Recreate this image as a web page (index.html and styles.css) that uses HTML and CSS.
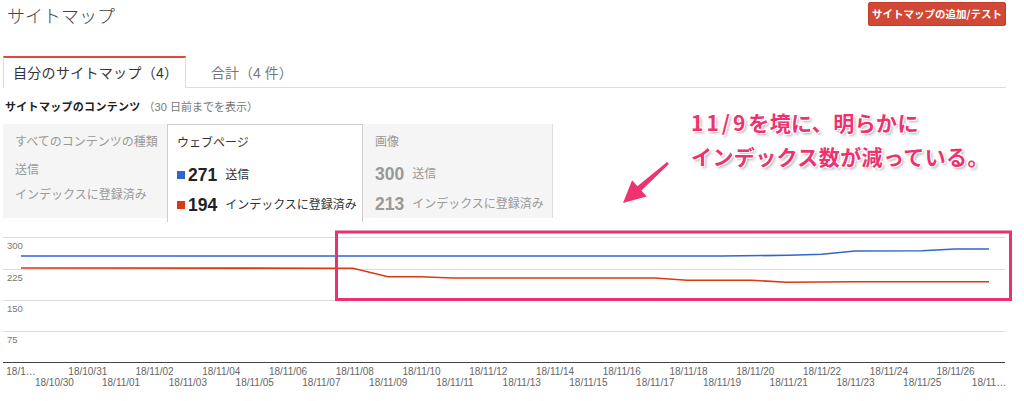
FILE: index.html
```html
<!DOCTYPE html>
<html lang="ja">
<head>
<meta charset="utf-8">
<title>サイトマップ</title>
<link rel="stylesheet" href="styles.css">
</head>
<body>
<div class="page">
  <header class="header">
    <h1 class="title">サイトマップ</h1>
    <button class="btn">サイトマップの追加/テスト</button>
  </header>
  <nav class="tabs">
    <div class="tab active">自分のサイトマップ（4）</div>
    <div class="tab">合計（4 件）</div>
  </nav>
  <div class="section-title"><b>サイトマップのコンテンツ</b><span class="note">（30 日前までを表示）</span></div>
  <div class="cards">
    <div class="card muted first">
      <div class="card-head">すべてのコンテンツの種類</div>
      <div class="row">送信</div>
      <div class="row">インデックスに登録済み</div>
    </div>
    <div class="card selected">
      <div class="card-head">ウェブページ</div>
      <div class="row"><span class="sw blue"></span><span class="num">271</span><span class="lbl">送信</span></div>
      <div class="row"><span class="sw red"></span><span class="num">194</span><span class="lbl">インデックスに登録済み</span></div>
    </div>
    <div class="card muted last">
      <div class="card-head">画像</div>
      <div class="row"><span class="num">300</span><span class="lbl">送信</span></div>
      <div class="row"><span class="num">213</span><span class="lbl">インデックスに登録済み</span></div>
    </div>
  </div>
</div>
<svg class="chart" width="1024" height="173" viewBox="0 228 1024 173" xmlns="http://www.w3.org/2000/svg">
  <line class="grid" x1="3" y1="237.5" x2="1005" y2="237.5"/>
  <line class="grid" x1="3" y1="269.5" x2="1005" y2="269.5"/>
  <line class="grid" x1="3" y1="300.5" x2="1005" y2="300.5"/>
  <line class="grid" x1="3" y1="331.5" x2="1005" y2="331.5"/>
  <line class="axis" x1="3" y1="362.5" x2="1005" y2="362.5"/>
  <text class="ylab" x="7" y="248.5">300</text>
  <text class="ylab" x="7" y="280.5">225</text>
  <text class="ylab" x="7" y="311.5">150</text>
  <text class="ylab" x="7" y="342.5">75</text>
  <polyline class="s-blue" points="21,256 722,256 789,255.3 822,254.3 855,251 922,250.7 955,249 989,249"/>
  <polyline class="s-red" points="21,268 322,268.2 353,268.3 388,276.7 420,276.7 453,278 655,278 687,280.3 752,280.3 787,282.2 855,281.7 989,281.7"/>
  <rect class="mark" x="336.5" y="232" width="674" height="67.5"/>
  <g class="xlab">
    <text x="21.0" y="375">18/1…</text>
    <text x="54.4" y="386">18/10/30</text>
    <text x="87.8" y="375">18/10/31</text>
    <text x="121.1" y="386">18/11/01</text>
    <text x="154.5" y="375">18/11/02</text>
    <text x="187.9" y="386">18/11/03</text>
    <text x="221.3" y="375">18/11/04</text>
    <text x="254.7" y="386">18/11/05</text>
    <text x="288.0" y="375">18/11/06</text>
    <text x="321.4" y="386">18/11/07</text>
    <text x="354.8" y="375">18/11/08</text>
    <text x="388.2" y="386">18/11/09</text>
    <text x="421.5" y="375">18/11/10</text>
    <text x="454.9" y="386">18/11/11</text>
    <text x="488.3" y="375">18/11/12</text>
    <text x="521.7" y="386">18/11/13</text>
    <text x="555.1" y="375">18/11/14</text>
    <text x="588.4" y="386">18/11/15</text>
    <text x="621.8" y="375">18/11/16</text>
    <text x="655.2" y="386">18/11/17</text>
    <text x="688.6" y="375">18/11/18</text>
    <text x="722.0" y="386">18/11/19</text>
    <text x="755.3" y="375">18/11/20</text>
    <text x="788.7" y="386">18/11/21</text>
    <text x="822.1" y="375">18/11/22</text>
    <text x="855.5" y="386">18/11/23</text>
    <text x="888.9" y="375">18/11/24</text>
    <text x="922.2" y="386">18/11/25</text>
    <text x="955.6" y="375">18/11/26</text>
    <text x="989.0" y="386">18/11…</text>
  </g>
</svg>
<div class="annotation"><span class="digits">11/9</span>を境に、明らかに<br>インデックス数が減っている。</div>
<svg class="arrow" width="80" height="80" viewBox="600 140 80 80" xmlns="http://www.w3.org/2000/svg">
  <polygon class="arrow-shape" points="623,203 646.7,196.6 641.4,190.6 668.9,163.9 667.1,162.1 637.4,186.2 632.1,180.2"/>
</svg>
</body>
</html>
```
FILE: styles.css
```css
* { box-sizing: border-box; }
html, body { margin: 0; padding: 0; }
body {
  position: relative;
  width: 1024px;
  height: 401px;
  overflow: hidden;
  background: #fff;
  color: #333;
  font-family: "Liberation Sans", "Noto Sans CJK JP", sans-serif;
}
.page { padding: 0 18px 0 3px; }

.header {
  display: flex;
  justify-content: space-between;
  align-items: flex-start;
  height: 56px;
}
.title {
  margin: 4px 0 0 4px;
  font-family: "Noto Sans CJK JP", sans-serif;
  font-weight: 300;
  font-size: 18px;
  line-height: 22px;
  color: #444;
}
.btn {
  margin-top: 2px;
  width: 138px;
  height: 24px;
  padding: 0;
  background: #d14836;
  border: 1px solid #c43c2a;
  border-radius: 2px;
  color: #fff;
  font-family: "Noto Sans CJK JP", sans-serif;
  font-weight: bold;
  font-size: 10.5px;
  line-height: 22px;
}

.tabs {
  display: flex;
  height: 32px;
  border-bottom: 1px solid #ddd;
}
.tab {
  font-family: "Liberation Sans", "Noto Sans CJK JP", sans-serif;
  font-size: 14px;
  line-height: 30px;
  color: #777;
  padding: 2px 0 0 25px;
}
.tab.active {
  width: 183px;
  height: 32px;
  padding: 0 0 0 9px;
  color: #333;
  background: #fff;
  border: 1px solid #ddd;
  border-top: 2px solid #dd4b39;
  border-bottom: none;
  margin-bottom: -1px;
  letter-spacing: 0.3px;
}

.section-title {
  padding-top: 12px;
  margin: 0 0 10px 2px;
  font-size: 11px;
  line-height: 14px;
  color: #222;
}
.section-title b { font-weight: bold; letter-spacing: 0.3px; }
.section-title .note { color: #777; margin-left: 3px; }

.cards {
  display: flex;
  align-items: flex-start;
  height: 98px;
}
.card {
  height: 94px;
  padding: 10px 0 0 12px;
  font-size: 12px;
}
.card-head { height: 16px; line-height: 16px; }
.row {
  height: 30px;
  line-height: 30px;
  display: flex;
  align-items: center;
  white-space: nowrap;
}
.card-head + .row { margin-top: 9px; }
.card.muted { background: #f5f5f5; color: #999; }
.card.first { width: 164px; }
.card.first .row { height: 25px; line-height: 25px; }
.card.first .card-head + .row { margin-top: 8px; }
.card.selected {
  width: 196px;
  height: 98px;
  padding-left: 9px;
  background: #fff;
  border: 1px solid #ccc;
  border-bottom: none;
  color: #333;
}
.card.last {
  width: 190px;
  border-right: 1px solid #ddd;
}
.sw {
  display: inline-block;
  width: 8px;
  height: 8px;
  margin-right: 3px;
}
.sw.blue { background: #3366cc; }
.sw.red { background: #dc3912; }
.num {
  font-family: "Liberation Sans", sans-serif;
  font-weight: bold;
  font-size: 17.5px;
  color: #222;
  margin-right: 8px;
}
.card.last .num { color: #999; }
.lbl { font-size: 12px; }

.chart { display: block; margin-top: 6px; }
.grid { stroke: #dcdcdc; stroke-width: 1; }
.axis { stroke: #444; stroke-width: 1; }
.ylab { font-family: "Liberation Sans", sans-serif; font-size: 9.5px; fill: #777; }
.xlab text {
  font-family: "Liberation Sans", sans-serif;
  font-size: 10px;
  fill: #666;
  text-anchor: middle;
}
.s-blue { fill: none; stroke: #3366cc; stroke-width: 1.6; }
.s-red { fill: none; stroke: #dc3912; stroke-width: 1.6; }
.mark { fill: none; stroke: #e9336f; stroke-width: 3; }

.annotation {
  position: absolute;
  left: 691px;
  top: 105px;
  font-family: "Noto Sans CJK JP", sans-serif;
  font-weight: bold;
  font-size: 21px;
  line-height: 34px;
  letter-spacing: 0.4px;
  color: #ec3370;
  white-space: nowrap;
  text-shadow: -1px -1px 0 #fff, 1px -1px 0 #fff, -1px 1px 0 #fff, 1px 1px 0 #fff, 2px 2px 3px rgba(0,0,0,0.35);
}
.annotation .digits { letter-spacing: 3px; }
.arrow { position: absolute; left: 600px; top: 140px; }
.arrow-shape { fill: #ee3370; }
```
